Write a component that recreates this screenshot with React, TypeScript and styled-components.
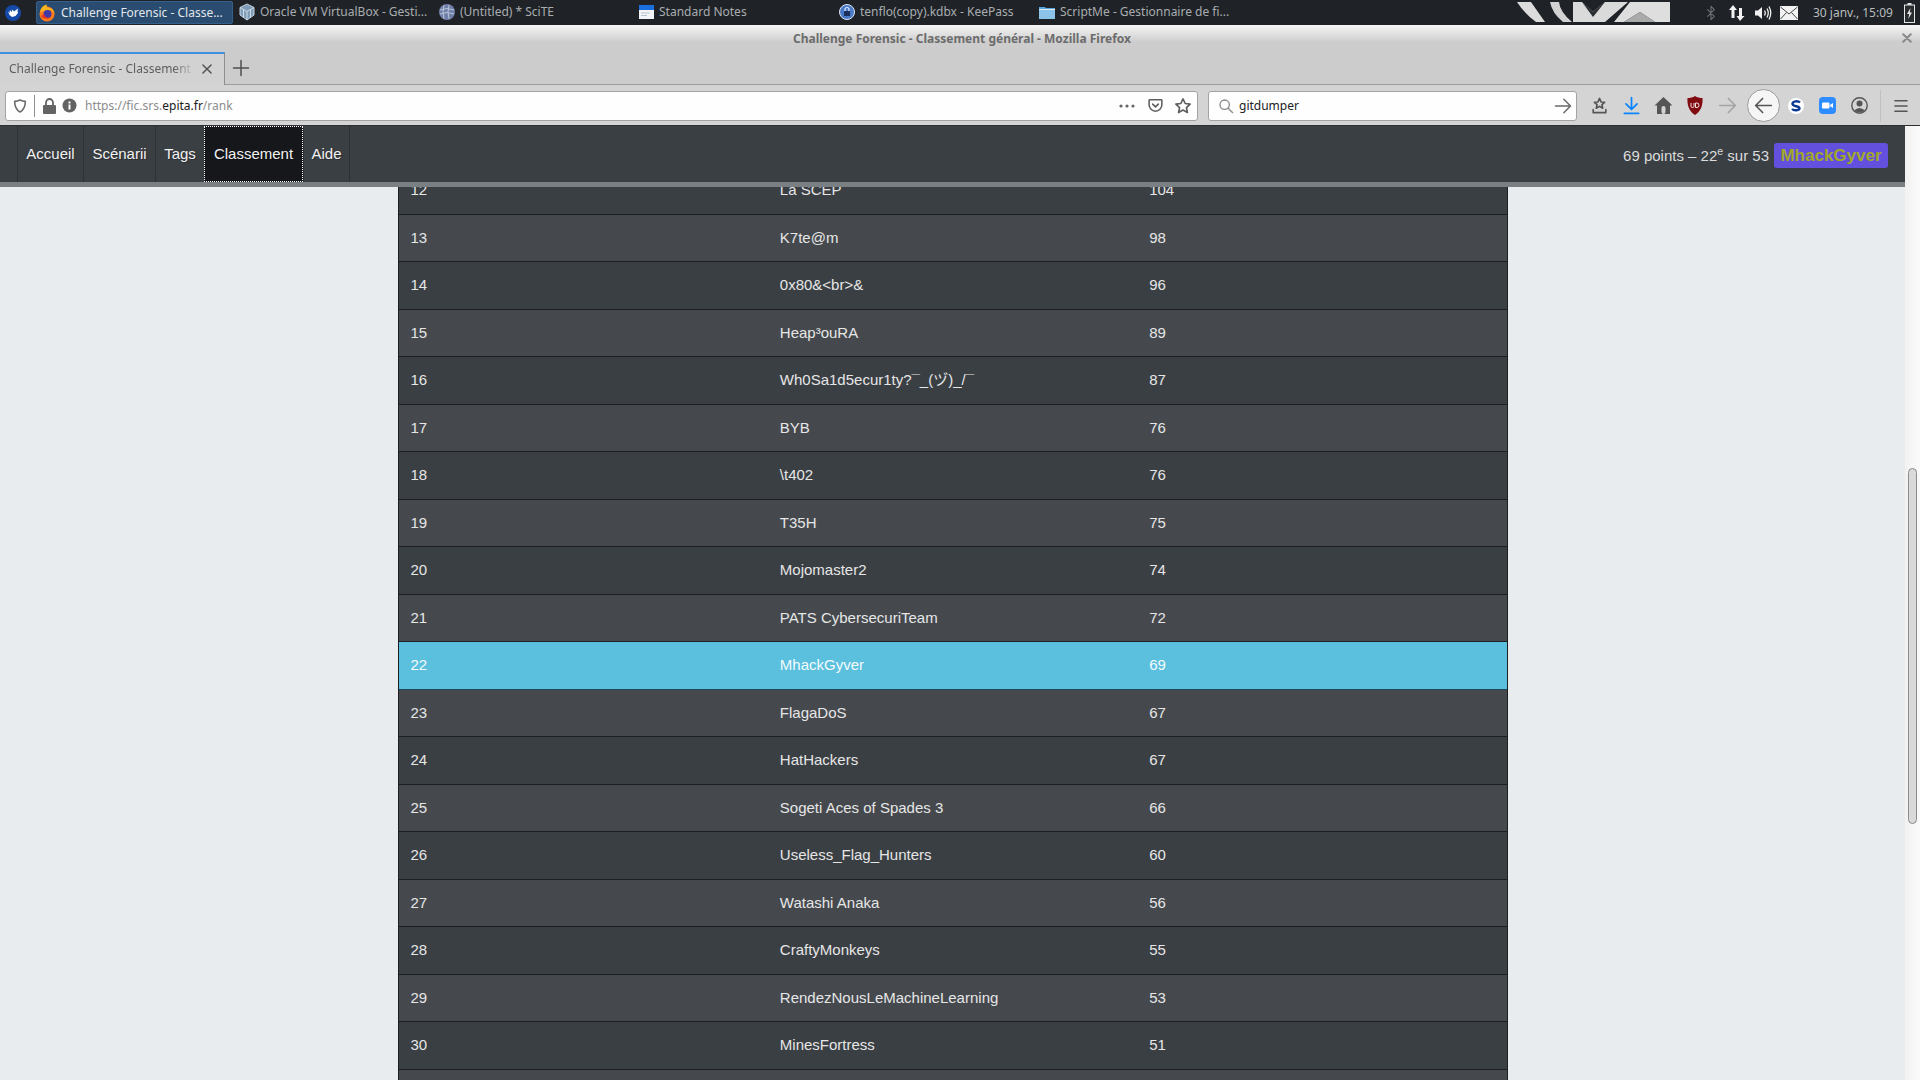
import React from "react";
import styled, { createGlobalStyle } from "styled-components";

const Global = createGlobalStyle`
  html, body { margin: 0; padding: 0; height: 100%; overflow: hidden; }
  #root { height: 100%; }
  * { box-sizing: border-box; }
`;

const uiFont = `"Noto Sans", "Open Sans", sans-serif`;
const pageFont = `"Liberation Sans", "Noto Sans CJK JP", Arial, sans-serif`;

const Screen = styled.div`
  width: 1920px;
  height: 1080px;
  display: flex;
  flex-direction: column;
  overflow: hidden;
  background: #e9ecef;
`;

/* ---------- desktop panel ---------- */
const Panel = styled.div`
  height: 25px;
  flex: none;
  background: #1f2327;
  display: flex;
  align-items: center;
  padding-left: 5px;
  font: 12px ${uiFont};
  color: #b4b8bb;
`;
const StartSlot = styled.div`
  width: 31px;
  flex: none;
  display: flex;
  align-items: center;
`;
const TaskList = styled.div`
  display: flex;
  width: 1200px;
  flex: none;
`;
const Task = styled.div<{ $active?: boolean }>`
  width: ${(p) => (p.$active ? "197px" : "200px")};
  height: 23px;
  display: flex;
  align-items: center;
  gap: ${(p) => (p.$active ? "6px" : "5px")};
  padding-left: 2px;
  padding-bottom: ${(p) => (p.$active ? "0" : "2px")};
  margin-right: ${(p) => (p.$active ? "3px" : "0")};
  white-space: nowrap;
  border-radius: 2px;
  color: ${(p) => (p.$active ? "#e3e8ec" : "#a9adb0")};
  background: ${(p) => (p.$active ? "#2a4c70" : "transparent")};
  border: 1px solid ${(p) => (p.$active ? "#35608c" : "transparent")};
  flex: none;
`;
const Tray = styled.div`
  margin-left: 274px;
  flex: none;
  display: flex;
  align-items: center;
  height: 25px;
`;
const Art = styled.svg`
  display: block;
  margin-right: 28px;
  align-self: flex-start;
  margin-top: 2px;
`;
const TrayIcon = styled.div`
  display: flex;
  align-items: center;
  justify-content: center;
  width: 26px;
`;
const Clock = styled.span`
  margin-left: 11px;
  width: 91px;
  color: #b8bcbf;
  white-space: nowrap;
  font-size: 12px;
`;

/* ---------- firefox window ---------- */
const TitleBar = styled.div`
  height: 27px;
  flex: none;
  background: linear-gradient(#f6f6f6 0, #cdcdcd 17px, #cccccc 100%);
  display: flex;
  align-items: center;
  justify-content: center;
  font: 700 12px ${uiFont};
  color: #6c6c6c;
  position: relative;
  padding-left: 4px;
`;
const WindowClose = styled.div`
  position: absolute;
  right: 8px;
  top: 8px;
  display: flex;
`;
const TabStrip = styled.div`
  height: 33px;
  flex: none;
  background: #cccccc;
  border-bottom: 1px solid #9c9c9c;
  display: flex;
  align-items: stretch;
`;
const Tab = styled.div`
  width: 225px;
  height: 33px;
  flex: none;
  border-top: 2px solid #3d8fe0;
  border-right: 1px solid #8e8e8e;
  background: #d2d2d2;
  display: flex;
  align-items: center;
  padding: 0 10px 2px 9px;
  font: 12px ${uiFont};
  color: #5e5e5e;
  justify-content: space-between;
`;
const TabLabel = styled.span`
  width: 186px;
  overflow: hidden;
  white-space: nowrap;
  -webkit-mask-image: linear-gradient(to right, #000 165px, transparent 186px);
  mask-image: linear-gradient(to right, #000 165px, transparent 186px);
`;
const NewTab = styled.div`
  width: 32px;
  display: flex;
  align-items: center;
  justify-content: center;
`;
const Toolbar = styled.div`
  height: 41px;
  flex: none;
  background: #d4d4d4;
  border-bottom: 1px solid #2c3035;
  display: flex;
  align-items: center;
  padding: 1px 0 0 5px;
`;
const Field = styled.div<{ $w: number }>`
  width: ${(p) => p.$w}px;
  height: 30px;
  flex: none;
  background: #fefefe;
  border: 1px solid #a3a3a3;
  border-radius: 3px;
  display: flex;
  align-items: center;
  font: 12px ${uiFont};
`;
const UrlField = styled(Field)`
  margin-right: 10px;
  padding: 0 5px 0 6px;
`;
const Divider = styled.span`
  width: 1px;
  height: 22px;
  background: #8f8f8f;
  margin: 0 7px 0 6px;
`;
const UrlText = styled.span`
  margin-left: 3px;
  color: #8d8d8d;
  flex: 1;
`;
const UrlHost = styled.span`
  color: #1a1a1a;
`;
const FieldIcon = styled.span<{ $before?: number; $after?: number }>`
  display: flex;
  align-items: center;
  margin-left: ${(p) => p.$before ?? 0}px;
  margin-right: ${(p) => p.$after ?? 5}px;
`;
const SearchField = styled(Field)`
  padding: 0 3px 0 9px;
`;
const SearchText = styled.span`
  flex: 1;
  margin-left: 5px;
  color: #222;
`;
const ToolGroup = styled.div`
  display: flex;
  align-items: center;
  margin-left: 6px;
`;
const ToolButton = styled.div`
  width: 32px;
  height: 32px;
  display: flex;
  align-items: center;
  justify-content: center;
  flex: none;
`;
const BackButton = styled.div`
  width: 33px;
  height: 33px;
  margin: 0 0 0 3.5px;
  border-radius: 50%;
  background: #f6f6f6;
  border: 1px solid #9a9a9a;
  display: flex;
  align-items: center;
  justify-content: center;
  flex: none;
`;
const ToolSeparator = styled.span`
  width: 1px;
  height: 32px;
  background: #c0c0c0;
  margin: 0 4px;
`;

/* ---------- page ---------- */
const Viewport = styled.div`
  flex: 1;
  display: flex;
  min-height: 0;
`;
const PageArea = styled.div`
  flex: 1;
  min-width: 0;
  display: flex;
  flex-direction: column;
  font: 15px/1.5 ${pageFont};
`;
const Nav = styled.nav`
  height: 61px;
  flex: none;
  background: #3a3f44;
  border-bottom: 5px solid #7a7f83;
  display: flex;
  align-items: stretch;
  justify-content: space-between;
  padding: 0 17px 0 17px;
  position: relative;
  z-index: 1;
`;
const NavList = styled.ul`
  list-style: none;
  margin: 0;
  padding: 0;
  display: flex;
`;
const NavItem = styled.li<{ $w: number; $active?: boolean }>`
  width: ${(p) => p.$w}px;
  display: flex;
  align-items: center;
  justify-content: center;
  color: #f2f2f2;
  text-shadow: 1px 1px 1px rgba(0, 0, 0, 0.3);
  border-left: 1px solid #2e3236;
  ${(p) =>
    p.$active &&
    `
    background: #15171a;
    outline: 1px dotted #fff;
    outline-offset: -1px;
    border-left: 0;
  `}
  &:last-child {
    border-right: 1px solid #2e3236;
  }
`;
const Score = styled.div`
  display: flex;
  align-items: center;
  gap: 5px;
  color: #dcdcdc;
  font-size: 15px;
  padding-top: 3px;
`;
const ScoreText = styled.span`
  padding-top: 1px;
`;
const Sup = styled.sup`
  font-size: 10.5px;
  line-height: 0;
`;
const Badge = styled.span`
  width: 114px;
  height: 25px;
  background: #6450df;
  border-radius: 3px;
  display: flex;
  align-items: center;
  justify-content: center;
  color: #a0a82a;
  font-weight: 700;
  font-size: 17px;
`;
const Scroller = styled.div`
  flex: 1;
  min-height: 0;
  overflow: hidden;
`;
/* the page is scrolled: row 12 is partly hidden under the fixed navigation bar */
const RankTable = styled.div`
  width: 1110px;
  margin: -20px auto 0;
  border-left: 1px solid #1c1e22;
  border-right: 1px solid #1c1e22;
`;
const Row = styled.div<{ $tone: "odd" | "even" | "me" }>`
  height: 47.5px;
  display: grid;
  grid-template-columns: repeat(3, 1fr);
  align-items: center;
  border-bottom: 1px solid ${(p) => (p.$tone === "me" ? "#1d4a58" : "#1c1e22")};
  background: ${(p) =>
    p.$tone === "me" ? "#5bc0de" : p.$tone === "odd" ? "#45494e" : "#3a3f44"};
  color: ${(p) => (p.$tone === "me" ? "#f4fbfd" : "#e6e6e6")};
`;
const Cell = styled.div`
  padding-left: 12px;
  white-space: nowrap;
`;
const ScrollTrack = styled.div`
  width: 15px;
  flex: none;
  background: linear-gradient(to right, #f1f1f1, #fbfbfb);
  padding: 342px 3px 0 3px;
`;
const ScrollThumb = styled.div`
  width: 9px;
  height: 356px;
  background: #dadada;
  border: 1px solid #8c8c8c;
  border-radius: 5px;
`;

/* ---------- drawings ---------- */
const Ico: React.FC<{ s?: number; c?: string; w?: number; children: React.ReactNode }> = ({
  s = 18,
  c = "#5a5a5a",
  w = 2,
  children,
}) => (
  <svg width={s} height={s} viewBox="0 0 24 24" fill="none" stroke={c} strokeWidth={w} strokeLinecap="round" strokeLinejoin="round">
    {children}
  </svg>
);

const StartLogo = () => (
  <svg width="16" height="16" viewBox="0 0 16 16">
    <circle cx="8" cy="8" r="8" fill="#1549a8" />
    <path d="M3 6 L4.5 8 L5 5 L6.5 7 L7.5 4.5 L9 6.5 L11 5 L13 3.5 L12.5 6 L13 8 L10.5 11 L7 12 L4.5 10 Z" fill="#fff" />
  </svg>
);
const FirefoxLogo = () => (
  <svg width="16" height="18" viewBox="0 0 16 18">
    <circle cx="8" cy="10" r="7.5" fill="#ff7a1a" />
    <path d="M1 8 C2 3 5 1 8 0.5 C7 3 9 4 11 4 C14 5 15.5 7.5 15.5 10 C14 7 12 6 10 6 Z" fill="#ffb41f" />
    <circle cx="8.5" cy="10" r="4" fill="#3d3aa8" />
    <path d="M2 12 C4 15 9 16 12 13 C9 14.5 6 13.5 5 10 Z" fill="#e5322b" />
  </svg>
);
const VBoxLogo = () => (
  <svg width="16" height="18" viewBox="0 0 16 18">
    <path d="M8 1 L15 4.5 L15 12 L8 17 L1 12 L1 4.5 Z" fill="#7f9cb8" stroke="#c8d6e2" strokeWidth="1" />
    <path d="M1 4.5 L8 8.5 L15 4.5 M8 8.5 L8 17 M4.5 6.5 L4.5 14 M11.5 6.5 L11.5 14" stroke="#d6e0e8" strokeWidth="0.9" fill="none" />
  </svg>
);
const SciteLogo = () => (
  <svg width="16" height="16" viewBox="0 0 16 16">
    <circle cx="8" cy="8" r="8" fill="#6f80a8" />
    <path d="M1 6 Q8 3 15 6 M1 10 Q8 7 15 10 M5 1 Q3 8 5 15 M10 1 Q8 8 10 15" stroke="#b9c3da" strokeWidth="1" fill="none" />
  </svg>
);
const NotesLogo = () => (
  <svg width="15" height="14" viewBox="0 0 15 14">
    <rect width="15" height="14" fill="#f2f4f7" />
    <rect width="15" height="5" fill="#1a6fe0" />
    <path d="M2 8 H11 M2 10.5 H8" stroke="#b9c4d0" strokeWidth="1" />
  </svg>
);
const KeepassLogo = () => (
  <svg width="16" height="16" viewBox="0 0 16 16">
    <circle cx="8" cy="8" r="7.5" fill="#4a79c8" stroke="#dfe7f5" strokeWidth="1" />
    <rect x="5" y="7" width="6" height="5" rx="0.5" fill="#1c2f5c" />
    <path d="M6 7 V5.5 a2 2 0 0 1 4 0 V7" stroke="#e7eefb" strokeWidth="1.2" fill="none" />
  </svg>
);
const FolderLogo = () => (
  <svg width="16" height="14" viewBox="0 0 16 14">
    <path d="M0 2 H6 L7 3 H16 V14 H0 Z" fill="#5aa3d6" />
    <rect y="4" width="16" height="10" fill="#8cc3e8" />
    <rect y="4" width="16" height="1" fill="#d7ecf9" />
  </svg>
);

const PanelArt = () => (
  <Art width="160" height="20" viewBox="0 0 160 20">
    <path d="M7 0 H21 L35 20 H26 Q14 11 7 0 Z" fill="#dcdcdc" />
    <path d="M40 0 H49 Q50 10 62 20 H53 Q42 11 40 0 Z" fill="#d2d2d2" />
    <path d="M63 0 H72 L83 10 L95 0 H118 L95 20 H63 Z" fill="#dadada" />
    <path d="M72 0 L83 10 L95 0 L83 15 Z" fill="#2b2e31" />
    <path d="M120 0 H160 V20 H145 L130 10 L114 20 H104 Z" fill="#dedede" />
    <path d="M130 10 L145 20 H114 Z" fill="#aaaaaa" />
  </Art>
);

type RowData = [number, string, number];
const rows: RowData[] = [
  [12, "La SCEP", 104],
  [13, "K7te@m", 98],
  [14, "0x80&<br>&", 96],
  [15, "Heap³ouRA", 89],
  [16, "Wh0Sa1d5ecur1ty?¯_(ヅ)_/¯", 87],
  [17, "BYB", 76],
  [18, "\\t402", 76],
  [19, "T35H", 75],
  [20, "Mojomaster2", 74],
  [21, "PATS CybersecuriTeam", 72],
  [22, "MhackGyver", 69],
  [23, "FlagaDoS", 67],
  [24, "HatHackers", 67],
  [25, "Sogeti Aces of Spades 3", 66],
  [26, "Useless_Flag_Hunters", 60],
  [27, "Watashi Anaka", 56],
  [28, "CraftyMonkeys", 55],
  [29, "RendezNousLeMachineLearning", 53],
  [30, "MinesFortress", 51],
];

const navItems: { label: string; w: number; active?: boolean }[] = [
  { label: "Accueil", w: 66 },
  { label: "Scénarii", w: 72 },
  { label: "Tags", w: 49 },
  { label: "Classement", w: 99, active: true },
  { label: "Aide", w: 47 },
];

const tone = (rank: number): "odd" | "even" | "me" =>
  rank === 22 ? "me" : rank % 2 === 1 ? "odd" : "even";

export default function App() {
  return (
    <Screen>
      <Global />
      <Panel>
        <StartSlot>
          <StartLogo />
        </StartSlot>
        <TaskList>
          <Task $active>
            <FirefoxLogo />
            Challenge Forensic - Classe...
          </Task>
          <Task>
            <VBoxLogo />
            Oracle VM VirtualBox - Gesti...
          </Task>
          <Task>
            <SciteLogo />
            (Untitled) * SciTE
          </Task>
          <Task>
            <NotesLogo />
            Standard Notes
          </Task>
          <Task>
            <KeepassLogo />
            tenflo(copy).kdbx - KeePass
          </Task>
          <Task>
            <FolderLogo />
            ScriptMe - Gestionnaire de fi...
          </Task>
        </TaskList>
        <Tray>
          <PanelArt />
          <TrayIcon>
            <Ico s={16} c="#6e7275" w={1.6}><path d="M7 7l10 10-5 5V2l5 5L7 17" /></Ico>
          </TrayIcon>
          <TrayIcon>
            <svg width="18" height="18" viewBox="0 0 18 18" fill="#f2f2f2">
              <path d="M5 1 L9 6 H6.5 V14 H3.5 V6 H1 Z" />
              <path d="M12 17 L8.5 12 H11 V4 H14 V12 H16.5 Z" />
            </svg>
          </TrayIcon>
          <TrayIcon>
            <svg width="18" height="18" viewBox="0 0 18 18">
              <path d="M1 6.5 H4 L8 3 V15 L4 11.5 H1 Z" fill="#f0f0f0" />
              <path d="M10.5 6.5 Q12 9 10.5 11.5 M13 4.5 Q15.5 9 13 13.5 M15 2.5 Q18.5 9 15 15.5" stroke="#f0f0f0" strokeWidth="1.3" fill="none" />
            </svg>
          </TrayIcon>
          <TrayIcon>
            <svg width="18" height="14" viewBox="0 0 18 14">
              <rect width="18" height="14" fill="#f2f2f2" />
              <path d="M0.5 1 L9 8 L17.5 1 M0.5 13 L6.5 6.5 M17.5 13 L11.5 6.5" stroke="#44484b" strokeWidth="1" fill="none" />
            </svg>
          </TrayIcon>
          <Clock>30 janv., 15:09</Clock>
          <svg width="11" height="20" viewBox="0 0 11 20">
            <rect x="3.5" y="0" width="4" height="2" fill="#e6e6e6" />
            <rect x="0.5" y="2" width="10" height="17.5" fill="#2a2d30" stroke="#e6e6e6" />
            <path d="M6.5 5 L3 11 H5.2 L4.2 16 L8 9.5 H5.8 Z" fill="#e6e6e6" />
          </svg>
        </Tray>
      </Panel>

      <TitleBar>
        Challenge Forensic - Classement général - Mozilla Firefox
        <WindowClose>
          <Ico s={10} c="#8a8a8a" w={5}><path d="M3 3l18 18M21 3L3 21" /></Ico>
        </WindowClose>
      </TitleBar>

      <TabStrip>
        <Tab>
          <TabLabel>Challenge Forensic - Classement général</TabLabel>
          <Ico s={14} c="#4f4f4f" w={2.4}><path d="M5 5l14 14M19 5L5 19" /></Ico>
        </Tab>
        <NewTab>
          <Ico s={18} c="#4f4f4f" w={2}><path d="M12 2v20M2 12h20" /></Ico>
        </NewTab>
      </TabStrip>

      <Toolbar>
        <UrlField $w={1193}>
          <Ico s={16} c="#6a6a6a" w={2.4}><path d="M12 3c3 1.5 5.5 2 8 2 0 8-2 13-8 16C6 18 4 13 4 5c2.5 0 5-.5 8-2z" /></Ico>
          <Divider />
          <FieldIcon>
            <svg width="15" height="16" viewBox="0 0 15 16" fill="#636363">
              <rect x="1" y="7" width="13" height="9" rx="1" />
              <path d="M4 7 V4.5 a3.5 3.5 0 0 1 7 0 V7" stroke="#636363" strokeWidth="1.8" fill="none" />
            </svg>
          </FieldIcon>
          <FieldIcon>
            <svg width="15" height="15" viewBox="0 0 15 15">
              <circle cx="7.5" cy="7.5" r="7" fill="#636363" />
              <rect x="6.5" y="6.5" width="2" height="5" fill="#fff" />
              <rect x="6.5" y="3.5" width="2" height="2" fill="#fff" />
            </svg>
          </FieldIcon>
          <UrlText>
            https://fic.srs.<UrlHost>epita.fr</UrlHost>/rank
          </UrlText>
          <FieldIcon>
            <svg width="16" height="4" viewBox="0 0 16 4" fill="#666">
              <circle cx="2" cy="2" r="1.6" />
              <circle cx="8" cy="2" r="1.6" />
              <circle cx="14" cy="2" r="1.6" />
            </svg>
          </FieldIcon>
          <FieldIcon $before={7}>
            <Ico s={17} c="#5e5e5e" w={2.2}><path d="M4 4h16a1 1 0 0 1 1 1v6a9 9 0 0 1-18 0V5a1 1 0 0 1 1-1z" /><path d="M8 10l4 4 4-4" /></Ico>
          </FieldIcon>
          <FieldIcon $before={5} $after={0}>
            <Ico s={18} c="#5e5e5e" w={2.2}><path d="M12 2.5l2.9 6.2 6.6.8-4.9 4.6 1.3 6.6L12 17.3l-5.9 3.4 1.3-6.6L2.5 9.5l6.6-.8z" /></Ico>
          </FieldIcon>
        </UrlField>
        <SearchField $w={369}>
          <Ico s={16} c="#8a8a8a" w={2}><circle cx="10" cy="10" r="7" /><path d="M15 15l7 7" /></Ico>
          <SearchText>gitdumper</SearchText>
          <Ico s={20} c="#6a6a6a" w={1.8}><path d="M3 12h18M13 4l8 8-8 8" /></Ico>
        </SearchField>
        <ToolGroup>
          <ToolButton>
            <Ico s={19} c="#555" w={2}><path d="M12 3l2 4.5 4.5.5-3.4 3 1 4.5-4.1-2.4-4.1 2.4 1-4.5L5.500 8 10 7.500z" /><path d="M4 17v4h16v-4" /></Ico>
          </ToolButton>
          <ToolButton>
            <Ico s={19} c="#0a84ff" w={2.2}><path d="M12 2v14M5 10l7 7 7-7M3 22h18" /></Ico>
          </ToolButton>
          <ToolButton>
            <svg width="19" height="19" viewBox="0 0 19 19">
              <path d="M9.500 1 L18.500 9.500 H16 V18 H3 V9.500 H0.500 Z" fill="#555" />
              <rect x="7.500" y="10" width="4" height="8" rx="2" fill="#d4d4d4" />
            </svg>
          </ToolButton>
          <ToolButton>
            <svg width="16" height="19" viewBox="0 0 16 19">
              <path d="M8 0 C10 1.500 13 2 15.500 2 C16 9 14 15 8 19 C2 15 0 9 0.500 2 C3 2 6 1.500 8 0 Z" fill="#7f0b10" />
              <path d="M4 7 V10.500 Q4 11.500 5.500 11.500 Q7 11.500 7 10.500 V7 M8.500 7 H10 Q12 7 12 9.200 Q12 11.500 10 11.500 H8.500 Z" stroke="#f3dede" strokeWidth="1" fill="none" />
            </svg>
          </ToolButton>
          <ToolButton>
            <Ico s={21} c="#a3a3a3" w={1.9}><path d="M3 12h18M13 4l8 8-8 8" /></Ico>
          </ToolButton>
          <BackButton>
            <Ico s={21} c="#555" w={1.9}><path d="M21 12H3M11 4l-8 8 8 8" /></Ico>
          </BackButton>
          <ToolButton>
            <svg width="16" height="16" viewBox="0 0 16 16">
              <circle cx="8" cy="8" r="8" fill="#fff" />
              <path d="M12 4.500 C10 2.500 4.500 3 4.500 5.800 C4.500 9 11.500 7.500 11.500 10.300 C11.500 12.500 6 13 4 11" stroke="#0b3a94" strokeWidth="2.400" fill="none" />
            </svg>
          </ToolButton>
          <ToolButton>
            <svg width="17" height="17" viewBox="0 0 17 17">
              <rect width="17" height="17" rx="4" fill="#2d8cff" />
              <rect x="3" y="5.500" width="7.500" height="6" rx="1.200" fill="#fff" />
              <path d="M11 8 L14 6 V11 L11 9 Z" fill="#fff" />
            </svg>
          </ToolButton>
          <ToolButton>
            <svg width="17" height="17" viewBox="0 0 17 17">
              <circle cx="8.500" cy="8.500" r="7.700" fill="none" stroke="#555" strokeWidth="1.400" />
              <circle cx="8.500" cy="6.500" r="3" fill="#555" />
              <path d="M3 13.500 Q8.500 8.500 14 13.500 Q8.500 17.500 3 13.500 Z" fill="#555" />
            </svg>
          </ToolButton>
          <ToolSeparator />
          <ToolButton>
            <Ico s={18} c="#555" w={2.2}><path d="M4 5h16M4 12h16M4 19h16" /></Ico>
          </ToolButton>
        </ToolGroup>
      </Toolbar>

      <Viewport>
        <PageArea>
          <Nav>
            <NavList>
              {navItems.map((n) => (
                <NavItem key={n.label} $w={n.w} $active={n.active}>
                  {n.label}
                </NavItem>
              ))}
            </NavList>
            <Score>
              <ScoreText>
                69 points – 22<Sup>e</Sup> sur 53
              </ScoreText>
              <Badge>MhackGyver</Badge>
            </Score>
          </Nav>
          <Scroller>
            <RankTable>
              {rows.map(([rank, team, pts]) => (
                <Row key={rank} $tone={tone(rank)}>
                  <Cell>{rank}</Cell>
                  <Cell>{team}</Cell>
                  <Cell>{pts}</Cell>
                </Row>
              ))}
              <Row $tone="odd" />
            </RankTable>
          </Scroller>
        </PageArea>
        <ScrollTrack>
          <ScrollThumb />
        </ScrollTrack>
      </Viewport>
    </Screen>
  );
}
